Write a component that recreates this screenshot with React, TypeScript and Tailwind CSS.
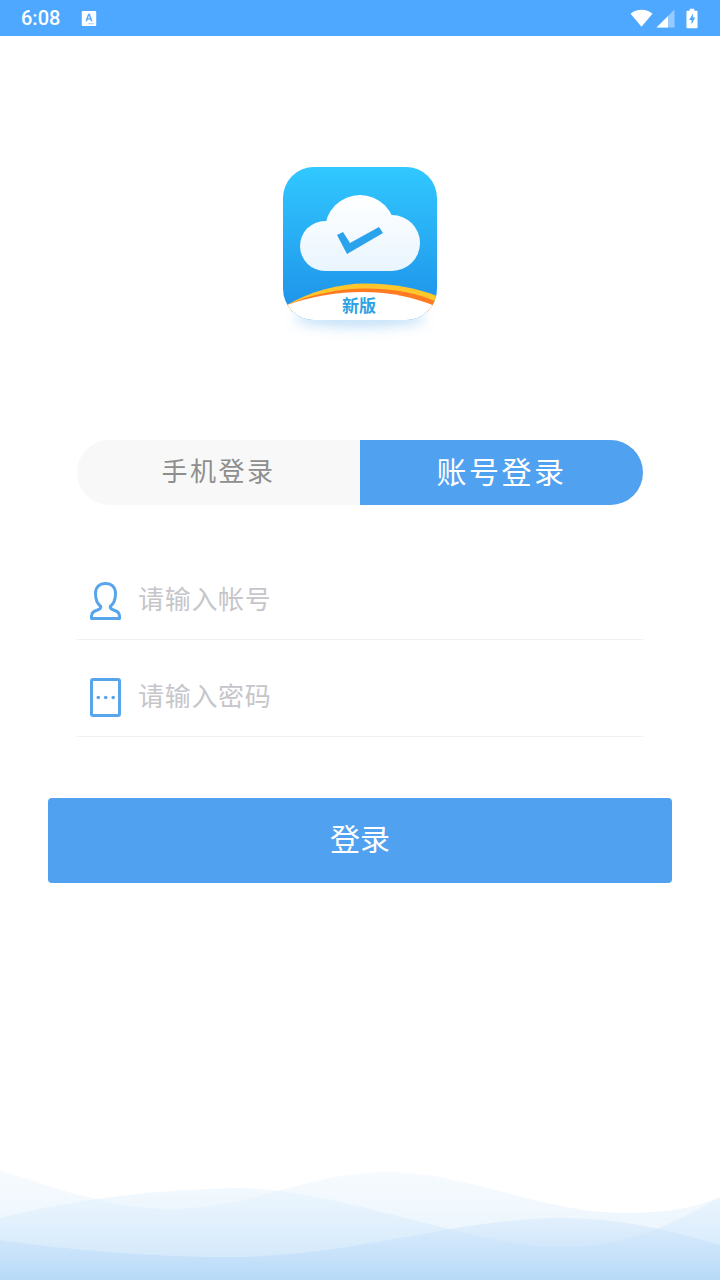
const cjk = "font-['Noto_Sans_CJK_SC','Noto_Sans',sans-serif]";

function StatusBar() {
  return (
    <div className="h-9 shrink-0 bg-[#4fa8ff] flex items-center pl-[21px] pr-[22px] text-white">
      <span className="font-['Roboto',sans-serif] text-[20px] leading-none font-medium">6:08</span>
      <svg className="ml-[21px]" width="16" height="17" viewBox="0 0 15 16">
        <path fillRule="evenodd" fill="#fff" d="M1.500 1h12a.8.8 0 0 1 .8.8v12.400a.8.8 0 0 1-.8.8h-12a.8.8 0 0 1-.8-.8V1.800a.8.8 0 0 1 .8-.8zM6.700 3.500 4.200 10.500h1.500l.5-1.500h2.600l.5 1.500h1.500L8.300 3.500zM6.600 7.800l.9-2.700.9 2.700zM9 12.500h1v1H9zM10.800 12.500h1v1h-1zM7.200 12.500h1v1h-1z" />
      </svg>
      <div className="ml-auto flex items-center">
        <svg width="23" height="18" viewBox="0 0 24 18">
          <path fill="#fff" d="M12 18 .6 4.600C3.600 2 7.600.4 12 .4s8.400 1.600 11.400 4.200z" />
        </svg>
        <svg className="ml-[3px]" width="19" height="19" viewBox="0 0 19 19">
          <path fill="#fff" fillOpacity="0.4" d="M18.500.5v18H.500z" />
          <path fill="#fff" d="M12 7.200V18.500H.5z" />
        </svg>
        <svg className="ml-[11px]" width="12" height="21" viewBox="0 0 13 21">
          <path fillRule="evenodd" fill="#fff" d="M4 0h5v2h2.500a1 1 0 0 1 1 1v17a1 1 0 0 1-1 1h-10a1 1 0 0 1-1-1V3a1 1 0 0 1 1-1H4zM7.500 5 3.500 12h2.500v5l4-7.500H7.500z" />
        </svg>
      </div>
    </div>
  );
}

function Logo() {
  return (
    <svg width="180" height="190" viewBox="270 155 180 190" className="block">
      <defs>
        <linearGradient id="bg" x1="0" y1="0" x2="0" y2="1">
          <stop offset="0" stopColor="#31c8ff" />
          <stop offset="1" stopColor="#1d8fe8" />
        </linearGradient>
        <linearGradient id="cl" gradientUnits="userSpaceOnUse" x1="0" y1="195" x2="0" y2="271">
          <stop offset="0" stopColor="#ffffff" />
          <stop offset="1" stopColor="#e9f5fe" />
        </linearGradient>
        <filter id="sh" x="-30%" y="-100%" width="160%" height="300%">
          <feGaussianBlur stdDeviation="6" />
        </filter>
        <clipPath id="ic">
          <rect x="283" y="167" width="154" height="153" rx="31" />
        </clipPath>
      </defs>
      <ellipse cx="360" cy="319" rx="66" ry="9" fill="#5eb0ee" fillOpacity="0.35" filter="url(#sh)" />
      <g clipPath="url(#ic)">
        <rect x="283" y="167" width="154" height="153" fill="url(#bg)" />
        <path fill="#ffc72c" d="M285 306C310 291 340 283.500 365 283.500C395 283.500 418 288.500 437 296V312H285z" />
        <path fill="#ff7a22" d="M286 305C312 294 340 288.500 365 288.500C395 288.500 418 293.500 437 302V312H286z" />
        <path fill="#fff" d="M287 305C312 296 338 292 362 292C392 292 415 298 435 306L440 325H280z" />
      </g>
      <g fill="url(#cl)">
        <circle cx="360" cy="230" r="35" />
        <circle cx="325" cy="246" r="25" />
        <circle cx="392" cy="243" r="28" />
        <rect x="325" y="235" width="67" height="36" />
      </g>
      <path fill="#2aa2ec" d="M337 235l6-3 7 11 29-16 4 6-36 21z" />
      <text x="359" y="312" textAnchor="middle" fontSize="17" fontWeight="700" fill="#2ea3e3" fontFamily="'Noto Sans CJK SC',sans-serif">
        新版
      </text>
    </svg>
  );
}

function Waves() {
  return (
    <svg width="720" height="130" viewBox="0 1150 720 130" className="block shrink-0 mt-auto">
      <defs>
        <linearGradient id="w1" gradientUnits="userSpaceOnUse" x1="0" y1="1170" x2="0" y2="1280">
          <stop offset="0" stopColor="#e3f1fd" stopOpacity="0.3" />
          <stop offset="1" stopColor="#d5e9fb" stopOpacity="0.7" />
        </linearGradient>
        <linearGradient id="w2" gradientUnits="userSpaceOnUse" x1="0" y1="1190" x2="0" y2="1280">
          <stop offset="0" stopColor="#e2f1fd" stopOpacity="0.45" />
          <stop offset="1" stopColor="#c3e0f9" stopOpacity="0.7" />
        </linearGradient>
        <linearGradient id="w3" gradientUnits="userSpaceOnUse" x1="0" y1="1220" x2="0" y2="1280">
          <stop offset="0" stopColor="#d4e8fb" stopOpacity="0.5" />
          <stop offset="1" stopColor="#b6d9f8" stopOpacity="0.95" />
        </linearGradient>
      </defs>
      <path fill="url(#w1)" d="M0 1170C60 1190 115 1209 170 1209C250 1209 310 1172 386 1172C470 1172 540 1213 624 1213C665 1213 695 1208 720 1197V1280H0z" />
      <path fill="url(#w2)" d="M0 1218C90 1195 170 1190 235 1188C340 1188 470 1247 560 1247C630 1247 670 1225 720 1197V1280H0z" />
      <path fill="url(#w3)" d="M0 1240C70 1250 150 1257 230 1257C350 1257 460 1218 560 1218C620 1218 670 1230 720 1245V1280H0z" />
    </svg>
  );
}

function Field({ placeholder, icon }: { placeholder: string; icon: React.ReactNode }) {
  return (
    <div className="h-[97px] border-b border-[#f0f0f0] flex items-end pb-[19px]">
      <div className="w-[62px] pl-[13px] flex items-center shrink-0">{icon}</div>
      <span className="text-[26px] leading-[38px] -translate-y-[3px] -ml-px text-[#c6c6ca] tracking-[0.7px]">{placeholder}</span>
    </div>
  );
}

export default function App() {
  return (
    <div className={`w-[720px] min-h-[1280px] bg-white flex flex-col ${cjk}`}>
      <StatusBar />
      <div className="mt-[119px] flex justify-center">
        <Logo />
      </div>
      <div className="mt-[95px] mx-[77px] h-[65px] rounded-full overflow-hidden flex">
        <div className="w-[283px] bg-[#f8f8f8] text-[#8e8e8e] text-[26px] pb-[6px] flex items-center justify-center tracking-[2.5px]">手机登录</div>
        <div className="flex-1 bg-[#50a1ef] text-white text-[30px] pb-[5px] flex items-center justify-center tracking-[2.5px]">账号登录</div>
      </div>
      <div className="mx-[77px] mt-[38px]">
        <Field
          placeholder="请输入帐号"
          icon={
            <svg width="31" height="38" viewBox="0 0 31 38" fill="none" stroke="#58a5ec" strokeWidth="3">
              <path strokeLinejoin="round" d="M1.500 36.500v-2.500c0-3.500 2.500-5 5.500-5.800 2.500-.7 3.800-1.500 3.800-3.700C7.500 22 5.500 18 5.500 11.500 5.500 5 9.500 1.500 15.500 1.500S25.500 5 25.500 11.500c0 6.500-2 10.500-5.300 13 0 2.200 1.300 3 3.800 3.700 3 .8 5.500 2.300 5.500 5.800v2.500z" />
            </svg>
          }
        />
        <Field
          placeholder="请输入密码"
          icon={
            <svg width="31" height="39" viewBox="0 0 31 39">
              <rect x="1.500" y="1.500" width="28" height="36" rx="1.500" fill="none" stroke="#58a5ec" strokeWidth="3" />
              <circle cx="8.300" cy="19.500" r="1.800" fill="#58a5ec" />
              <circle cx="15.700" cy="19.500" r="1.800" fill="#58a5ec" />
              <circle cx="23.200" cy="19.500" r="1.800" fill="#58a5ec" />
            </svg>
          }
        />
      </div>
      <div className="mx-12 mt-[61px] h-[85px] rounded-[4px] bg-[#50a1ef] text-white text-[30px] pb-[7px] flex items-center justify-center">
        登录
      </div>
      <Waves />
    </div>
  );
}
